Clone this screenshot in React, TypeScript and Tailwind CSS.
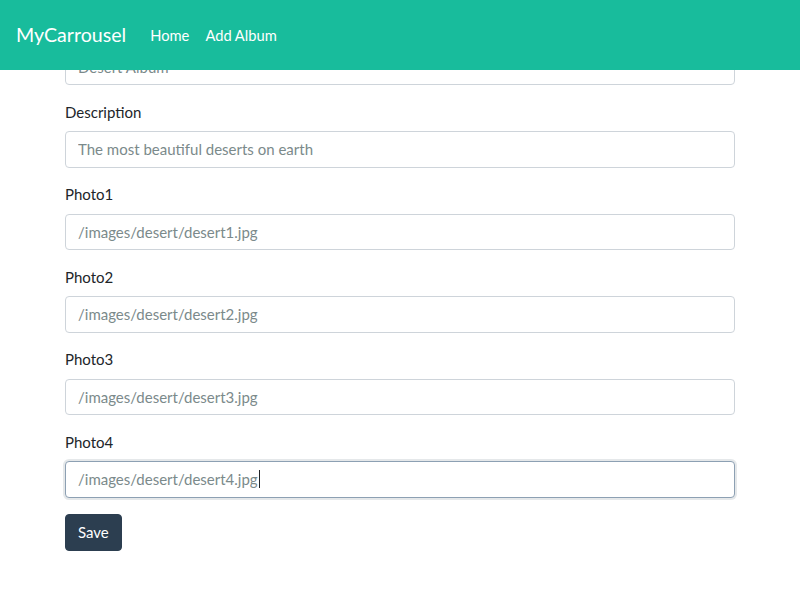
import React from "react";

const fields = [
  { label: "Title", value: "Desert Album" },
  { label: "Description", value: "The most beautiful deserts on earth" },
  { label: "Photo1", value: "/images/desert/desert1.jpg" },
  { label: "Photo2", value: "/images/desert/desert2.jpg" },
  { label: "Photo3", value: "/images/desert/desert3.jpg" },
];

export default function App() {
  return (
    <div
      className="relative min-h-[600px] bg-white text-[#212529]"
      style={{ fontFamily: "Lato, 'Noto Sans', sans-serif" }}
    >
      <nav className="fixed top-0 left-0 right-0 z-10 flex h-[70px] items-center bg-[#18bc9c] px-4">
        <span className="mr-4 text-[19.6px] leading-[30px] text-white">MyCarrousel</span>
        <div className="flex items-center">
          <span className="px-2 text-[14.7px] leading-[22.5px] text-white">Home</span>
          <span className="px-2 text-[14.7px] leading-[22.5px] text-white">Add Album</span>
        </div>
      </nav>
      <main className="mx-auto w-[670px] pt-[18px]">
        {fields.map((f) => (
          <div key={f.label} className="mb-[15.5px]">
            <label className="mb-2 block text-[15px] leading-[22.5px]">{f.label}</label>
            <input
              readOnly
              value={f.value}
              className="block w-full rounded-[4px] border border-[#ced4da] bg-white px-3 py-[6px] text-[15px] leading-[22.5px] text-[#7b8a8b] outline-none"
            />
          </div>
        ))}
        <div className="mb-[16.5px]">
          <label className="mb-2 block text-[15px] leading-[22.5px]">Photo4</label>
          <div className="flex h-[36.5px] w-full items-center rounded-[4px] border border-[#8da0b3] bg-white px-3 text-[15px] leading-[22.5px] text-[#7b8a8b] shadow-[0_0_0_2px_rgba(44,62,80,0.12)]">
            <span>/images/desert/desert4.jpg</span>
            <span className="ml-px inline-block h-[18px] w-px bg-[#212529]" />
          </div>
        </div>
        <button className="rounded-[4px] border border-[#2c3e50] bg-[#2c3e50] px-3 py-[6px] text-[15px] leading-[22.5px] text-white">
          Save
        </button>
      </main>
    </div>
  );
}
